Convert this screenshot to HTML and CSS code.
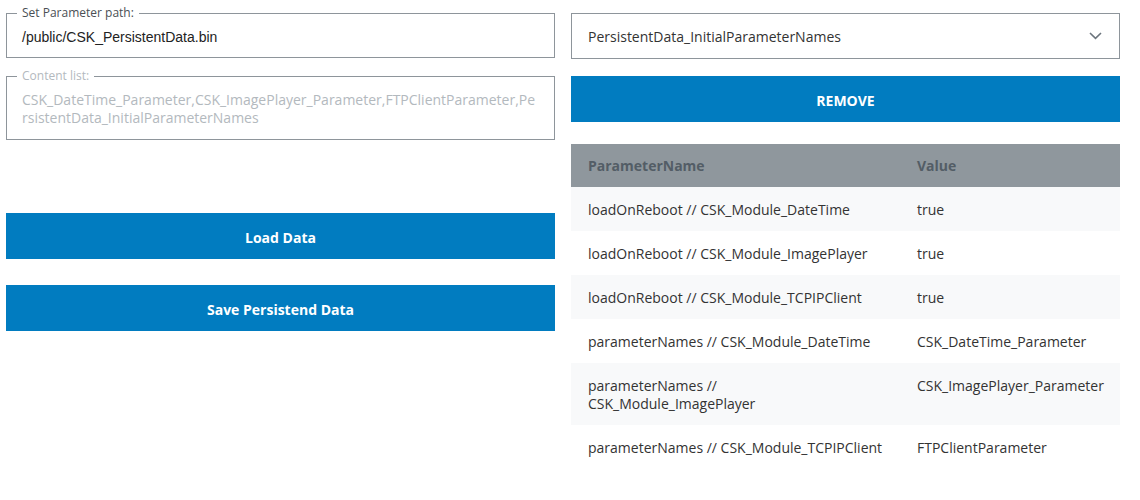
FILE: index.html
```html
<!DOCTYPE html>
<html>
<head>
<meta charset="utf-8">
<link rel="stylesheet" href="styles.css">
</head>
<body>
<div class="page">
  <div class="col-left">
    <fieldset class="field">
      <legend class="legend">Set Parameter path:</legend>
      <div class="path-value">/public/CSK_PersistentData.bin</div>
    </fieldset>
    <fieldset class="field field-disabled">
      <legend class="legend legend-disabled">Content list:</legend>
      <div class="list-value">CSK_DateTime_Parameter,CSK_ImagePlayer_Parameter,FTPClientParameter,PersistentData_InitialParameterNames</div>
    </fieldset>
    <button class="btn btn-load">Load Data</button>
    <button class="btn btn-save">Save Persistend Data</button>
  </div>
  <div class="col-right">
    <div class="select">
      <span class="select-text">PersistentData_InitialParameterNames</span>
      <svg class="chevron" width="13" height="8" viewBox="0 0 13 8"><path d="M1 1 L6.5 6.3 L12 1" fill="none" stroke="#6c757d" stroke-width="1.6"/></svg>
    </div>
    <button class="btn btn-remove">REMOVE</button>
    <table class="table">
      <colgroup><col class="c1"><col class="c2"></colgroup>
      <thead>
        <tr><th>ParameterName</th><th>Value</th></tr>
      </thead>
      <tbody>
        <tr><td>loadOnReboot // CSK_Module_DateTime</td><td>true</td></tr>
        <tr><td>loadOnReboot // CSK_Module_ImagePlayer</td><td>true</td></tr>
        <tr><td>loadOnReboot // CSK_Module_TCPIPClient</td><td>true</td></tr>
        <tr><td>parameterNames // CSK_Module_DateTime</td><td>CSK_DateTime_Parameter</td></tr>
        <tr><td>parameterNames // CSK_Module_ImagePlayer</td><td>CSK_ImagePlayer_Parameter</td></tr>
        <tr><td>parameterNames // CSK_Module_TCPIPClient</td><td>FTPClientParameter</td></tr>
      </tbody>
    </table>
  </div>
</div>
</body>
</html>
```
FILE: styles.css
```css
* { box-sizing: border-box; }
html, body { margin: 0; padding: 0; background: #fff; }
body {
  font-family: "Open Sans", "Noto Sans", sans-serif;
  font-size: 14px;
  color: #333;
}
.page {
  display: grid;
  grid-template-columns: 1fr 1fr;
  column-gap: 16px;
  padding: 6px 20px 0 6px;
  width: 1140px;
}
.col-left, .col-right {
  display: flex;
  flex-direction: column;
  min-width: 0;
}
.field {
  margin: 0;
  padding: 8px 15px 11px;
  border: 1px solid #8e959b;
  min-width: 0;
}
.field-disabled {
  margin-top: 11px;
  padding-top: 8px;
  padding-bottom: 12px;
}
.legend {
  font-size: 12px;
  line-height: 14px;
  padding: 0 5px;
  margin-left: -5px;
  color: #4a4f55;
}
.legend-disabled { color: #b3b9be; }
.path-value {
  font-family: "Liberation Sans", Arial, sans-serif;
  font-size: 14px;
  line-height: 18px;
  color: #222;
}
.list-value {
  font-size: 14px;
  line-height: 18px;
  color: #b3b9be;
  word-break: break-all;
}
.btn {
  display: block;
  width: 100%;
  height: 46px;
  border: 0;
  margin: 0;
  padding: 3px 0 0;
  background: #017cc0;
  color: #fff;
  font-family: "Open Sans", "Noto Sans", sans-serif;
  font-weight: 700;
  font-size: 14px;
}
.btn-load { margin-top: 73px; }
.btn-save { margin-top: 26px; }
.col-right { padding-top: 7px; }
.select {
  height: 46px;
  border: 1px solid #8e959b;
  display: flex;
  align-items: center;
  justify-content: space-between;
  padding: 0 17px 0 16px;
}
.select-text { font-size: 14px; color: #333; }
.chevron { display: block; margin-top: -1px; }
.btn-remove { margin-top: 17px; }
.table {
  margin-top: 22px;
  width: 100%;
  border-collapse: collapse;
  table-layout: fixed;
}
.c1 { width: 329px; }
.table th {
  background: #8f979d;
  color: #535d66;
  font-weight: 700;
  text-align: left;
  line-height: 19px;
  padding: 12px 16px 12px 17px;
}
.table td {
  line-height: 18px;
  padding: 14px 16px 12px 17px;
  vertical-align: top;
  color: #333;
}
.table tbody tr:nth-child(odd) td { background: #f8f9fa; }
```
